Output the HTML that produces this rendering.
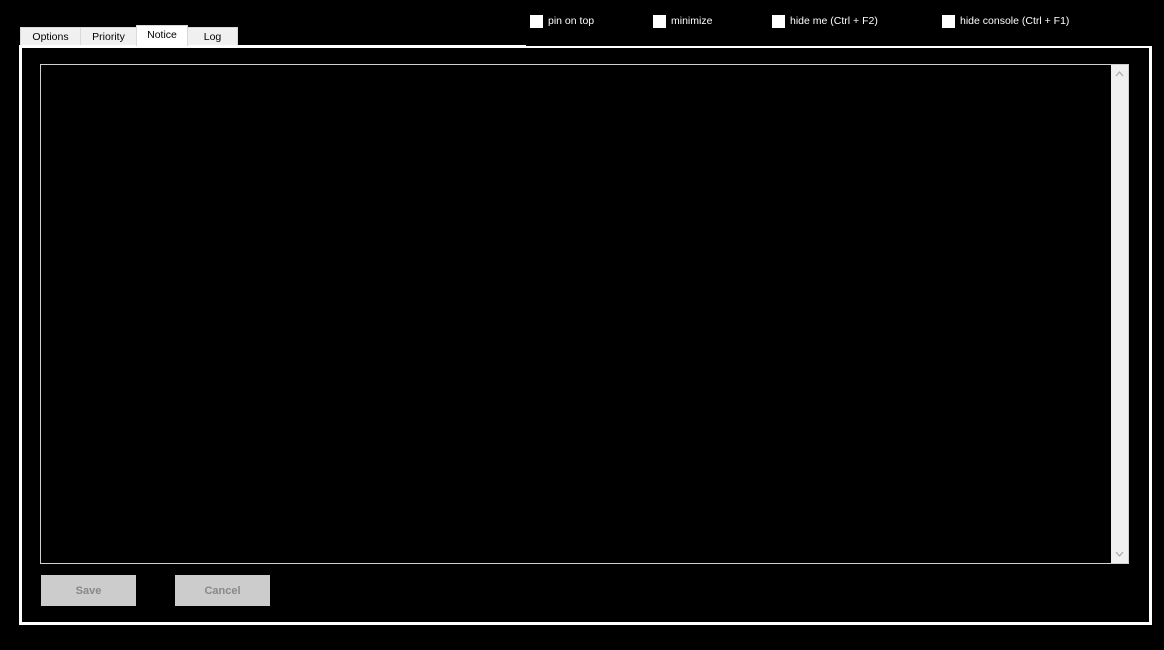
<!DOCTYPE html>
<html><head><style>
body{margin:0;width:1164px;height:650px;background:#000;position:relative;overflow:hidden;font-family:"Liberation Sans",Arial,sans-serif;font-size:11px}
.abs{position:absolute}
.tab{position:absolute;top:27px;height:18px;background:#f0f0f0;border:1px solid #d9d9d9;border-bottom:none;box-sizing:border-box;color:#000;text-align:center;line-height:19px;font-size:10.5px}
.cb{position:absolute;top:15px;width:13px;height:13px;background:#fff}
.lbl{position:absolute;top:15px;color:#fff;font-size:10.5px}
.btn{position:absolute;top:575px;width:95px;height:31px;background:#cccccc;color:#888;font-weight:bold;text-align:center;line-height:33px;font-size:11px}
</style></head><body>
<div class="abs" style="left:19px;top:45px;width:1133px;height:580px;border:3px solid #fff;box-sizing:border-box"></div>
<div class="abs" style="left:526px;top:44px;width:626px;height:2px;background:#000"></div>
<div class="tab" style="left:20px;width:61px">Options</div>
<div class="tab" style="left:80px;width:57px">Priority</div>
<div class="tab" style="left:136px;top:25px;height:21px;width:52px;background:#fff;line-height:19px">Notice</div>
<div class="tab" style="left:187px;width:51px">Log</div>
<div class="abs" style="left:40px;top:64px;width:1089px;height:500px;border:1px solid #d0d0d0;box-sizing:border-box;background:#000"></div>
<div class="abs" style="left:1111px;top:65px;width:17px;height:498px;background:#f0f0f0"></div>
<svg class="abs" style="left:1111px;top:65px" width="17" height="498"><path d="M5 11 L8.5 7 L12 11" fill="none" stroke="#a8a8a8" stroke-width="1.2"/><path d="M5 487 L8.5 491 L12 487" fill="none" stroke="#a8a8a8" stroke-width="1.2"/></svg>
<div class="btn" style="left:41px">Save</div>
<div class="btn" style="left:175px">Cancel</div>
<div class="cb" style="left:530px"></div><div class="lbl" style="left:548px">pin on top</div>
<div class="cb" style="left:653px"></div><div class="lbl" style="left:671px">minimize</div>
<div class="cb" style="left:772px"></div><div class="lbl" style="left:790px">hide me (Ctrl + F2)</div>
<div class="cb" style="left:942px"></div><div class="lbl" style="left:960px">hide console (Ctrl + F1)</div>
</body></html>
